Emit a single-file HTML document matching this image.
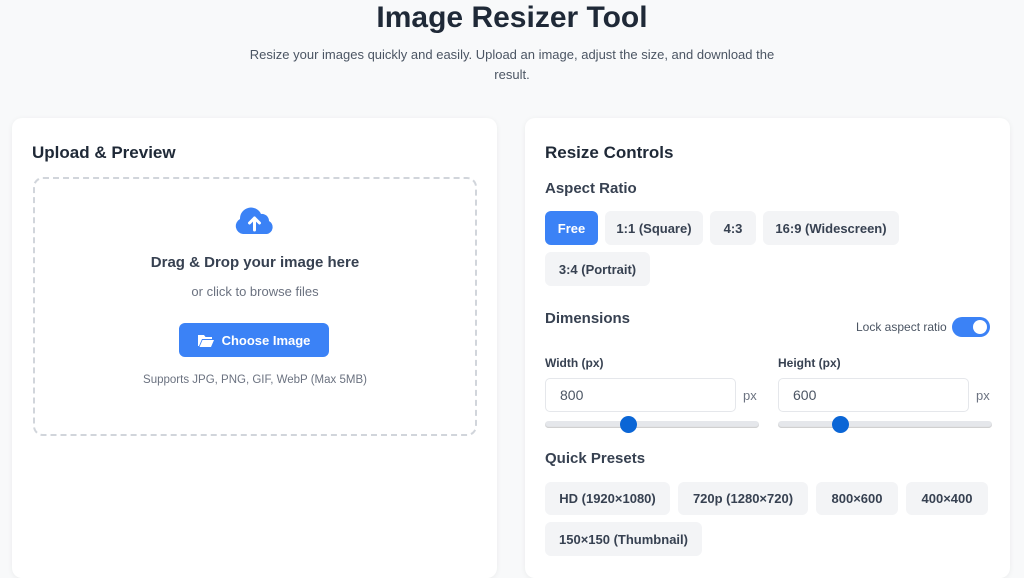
<!DOCTYPE html>
<html><head><meta charset="utf-8"><style>
*{box-sizing:border-box;margin:0;padding:0}
body{width:1024px;height:562px;overflow:hidden;background:#f8f9fa;font-family:"Liberation Sans",sans-serif;color:#1f2937;position:relative}
.a{position:absolute;white-space:nowrap}
.card{position:absolute;background:#fff;border-radius:10px;box-shadow:0 1px 6px rgba(0,0,0,.06)}
.h2{font-size:17px;font-weight:bold;color:#1f2937}
.h3{font-size:15px;font-weight:bold;color:#374151}
.btn{position:absolute;background:#f3f4f6;border-radius:6px;font-size:13px;font-weight:bold;color:#374151;display:flex;align-items:center;justify-content:center}
.inp{position:absolute;border:1px solid #e5e7eb;border-radius:5px;height:34px;font-size:14px;color:#4b5563;padding-left:14px;line-height:32px}
.track{position:absolute;height:7px;background:#e5e7eb;border-radius:4px;box-shadow:inset 0 -1px 1px #ccc}
.thumb{position:absolute;width:17px;height:17px;border-radius:50%;background:#0b66d6}
</style></head><body>
<div class="a" style="left:0;width:1024px;top:0;text-align:center;font-size:30px;font-weight:bold;color:#1f2937;line-height:36px">Image Resizer Tool</div>
<div class="a" style="left:232px;width:560px;top:45px;text-align:center;white-space:normal;font-size:13px;color:#4b5563;line-height:20px">Resize your images quickly and easily. Upload an image, adjust the size, and download the result.</div>

<div class="card" style="left:12px;top:118px;width:485px;height:460px"></div>
<div class="a h2" style="left:32px;top:143px">Upload &amp; Preview</div>
<div style="position:absolute;left:33px;top:177px;width:444px;height:259px;border:2px dashed #d1d5db;border-radius:10px"></div>
<svg style="position:absolute;left:234px;top:207px" width="41" height="28" viewBox="0 0 41 28"><path d="M9 27 A8 8 0 0 1 6 12 A11 11 0 0 1 27 7 A7 7 0 0 1 35 14 A7 7 0 0 1 33 27Z" fill="#3b82f6"/><path d="M20.5 23V11M15.5 16l5-5 5 5" stroke="#fff" stroke-width="3" fill="none" stroke-linecap="round" stroke-linejoin="round"/></svg>
<div class="a" style="left:33px;width:444px;text-align:center;top:254px;font-size:15px;font-weight:bold;color:#374151">Drag &amp; Drop your image here</div>
<div class="a" style="left:33px;width:444px;text-align:center;top:284px;font-size:13px;color:#6b7280">or click to browse files</div>
<div style="position:absolute;left:179px;top:323px;width:150px;height:34px;background:#3b82f6;border-radius:6px;color:#fff;font-size:13px;font-weight:bold;display:flex;align-items:center;justify-content:center;gap:8px"><svg width="16" height="13" viewBox="0 0 16 13"><path d="M0 1h6l1.5 2H14v2H4L1 12H0Z M4.5 6H16l-3 7H1.5Z" fill="#fff"/></svg>Choose Image</div>
<div class="a" style="left:33px;width:444px;text-align:center;top:374px;font-size:11.5px;color:#6b7280">Supports JPG, PNG, GIF, WebP (Max 5MB)</div>

<div class="card" style="left:525px;top:118px;width:485px;height:460px"></div>
<div class="a h2" style="left:545px;top:143px">Resize Controls</div>
<div class="a h3" style="left:545px;top:180px">Aspect Ratio</div>
<div class="btn" style="left:545px;top:211px;width:53px;height:34px;background:#3b82f6;color:#fff">Free</div>
<div class="btn" style="left:605px;top:211px;width:98px;height:34px">1:1 (Square)</div>
<div class="btn" style="left:710px;top:211px;width:46px;height:34px">4:3</div>
<div class="btn" style="left:763px;top:211px;width:136px;height:34px">16:9 (Widescreen)</div>
<div class="btn" style="left:545px;top:252px;width:105px;height:34px">3:4 (Portrait)</div>
<div class="a h3" style="left:545px;top:310px">Dimensions</div>
<div class="a" style="left:856px;top:320px;font-size:12px;color:#4b5563">Lock aspect ratio</div>
<div style="position:absolute;left:952px;top:317px;width:38px;height:20px;border-radius:10px;background:#3b82f6"><div style="position:absolute;right:3px;top:3px;width:14px;height:14px;border-radius:50%;background:#fff"></div></div>
<div class="a" style="left:545px;top:356px;font-size:12px;font-weight:bold;color:#374151">Width (px)</div>
<div class="a" style="left:778px;top:356px;font-size:12px;font-weight:bold;color:#374151">Height (px)</div>
<div class="inp" style="left:545px;top:378px;width:191px">800</div>
<div class="inp" style="left:778px;top:378px;width:191px">600</div>
<div class="a" style="left:743px;top:388px;font-size:13px;color:#6b7280">px</div>
<div class="a" style="left:976px;top:388px;font-size:13px;color:#6b7280">px</div>
<div class="track" style="left:545px;top:421px;width:214px"></div>
<div class="thumb" style="left:620px;top:416px"></div>
<div class="track" style="left:778px;top:421px;width:214px"></div>
<div class="thumb" style="left:832px;top:416px"></div>
<div class="a h3" style="left:545px;top:450px">Quick Presets</div>
<div class="btn" style="left:545px;top:482px;width:125px;height:33px">HD (1920×1080)</div>
<div class="btn" style="left:678px;top:482px;width:130px;height:33px">720p (1280×720)</div>
<div class="btn" style="left:816px;top:482px;width:82px;height:33px">800×600</div>
<div class="btn" style="left:906px;top:482px;width:82px;height:33px">400×400</div>
<div class="btn" style="left:545px;top:522px;width:157px;height:34px">150×150 (Thumbnail)</div>
</body></html>
